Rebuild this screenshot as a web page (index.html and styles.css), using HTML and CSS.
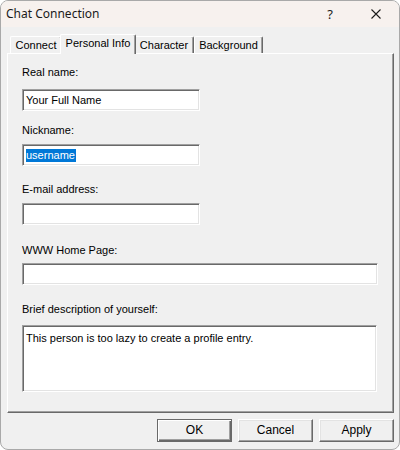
FILE: index.html
```html
<!DOCTYPE html>
<html>
<head>
<meta charset="utf-8">
<link rel="stylesheet" href="styles.css">
</head>
<body>
<div class="window">
  <div class="titlebar">
    <span class="title">Chat Connection</span>
    <span class="cap-btn help">?</span>
    <span class="cap-btn close">
      <svg width="10" height="10" viewBox="0 0 10 10"><path d="M0.5 0.5 L9.5 9.5 M9.5 0.5 L0.5 9.5" stroke="#1b1b1b" stroke-width="1.1" fill="none"/></svg>
    </span>
  </div>
  <div class="body">
    <div class="tabs">
      <div class="tab tab-connect">Connect</div>
      <div class="tab tab-personal active">Personal Info</div>
      <div class="tab tab-character">Character</div>
      <div class="tab tab-background">Background</div>
    </div>
    <div class="panel">
      <div class="field field-real">
        <div class="label">Real name:</div>
        <div class="input short">Your Full Name</div>
      </div>
      <div class="field field-nick">
        <div class="label">Nickname:</div>
        <div class="input short"><span class="sel">username</span></div>
      </div>
      <div class="field field-email">
        <div class="label">E-mail address:</div>
        <div class="input short"></div>
      </div>
      <div class="field field-www">
        <div class="label">WWW Home Page:</div>
        <div class="input long"></div>
      </div>
      <div class="field field-brief">
        <div class="label">Brief description of yourself:</div>
        <div class="input area">This person is too lazy to create a profile entry.</div>
      </div>
    </div>
    <div class="buttons">
      <div class="btn default">OK</div>
      <div class="btn">Cancel</div>
      <div class="btn">Apply</div>
    </div>
  </div>
</div>
</body>
</html>
```

FILE: styles.css
```css
* { box-sizing: border-box; }
html, body { margin: 0; padding: 0; background: #ffffff; }
body {
  width: 400px;
  height: 450px;
  font-family: "Liberation Sans", Arial, sans-serif;
  font-size: 11px;
  color: #000;
}
.window {
  width: 400px;
  height: 450px;
  border: 1px solid #a9a9a9;
  border-radius: 8px;
  background: #f0f0f0;
  overflow: hidden;
  display: flex;
  flex-direction: column;
}
.titlebar {
  height: 26px;
  background: #f7f1ee;
  display: flex;
  align-items: center;
  flex: none;
}
.title {
  flex: 1;
  padding-left: 5px;
  font-family: "Noto Sans", "Open Sans", sans-serif;
  font-size: 12px;
  color: #1a1a1a;
  line-height: 16px;
}
.cap-btn {
  width: 46px;
  height: 26px;
  display: flex;
  align-items: center;
  justify-content: center;
  font-family: "Noto Sans", sans-serif;
  font-size: 13px;
  color: #1a1a1a;
}
.close svg { display: block; }
.body {
  flex: 1;
  display: flex;
  flex-direction: column;
  padding: 7px 0 0 6px;
}
.tabs {
  height: 19px;
  display: flex;
  align-items: flex-end;
  padding-left: 3px;
  position: relative;
  z-index: 2;
}
.tab {
  height: 17px;
  line-height: 16px;
  text-align: center;
  white-space: nowrap;
  background: #f0f0f0;
  border-top: 1px solid #ffffff;
  border-left: 1px solid #ffffff;
  border-right: 1px solid #696969;
  box-shadow: inset -1px 0 #a0a0a0;
  border-radius: 2px 2px 0 0;
}
.tab-connect { width: 52px; }
.tab-personal { width: 76px; }
.tab-character { width: 60px; }
.tab-background { width: 69px; }
.tab.active {
  height: 20px;
  margin: 0 -2px -1px -2px;
  padding-bottom: 3px;
  line-height: 16px;
  position: relative;
  z-index: 3;
}
.panel {
  width: 387px;
  height: 360px;
  border: 1px solid;
  border-color: #ffffff #696969 #696969 #ffffff;
  box-shadow: inset -1px -1px #a0a0a0;
  padding: 12px 0 0 14px;
  display: flex;
  flex-direction: column;
  flex: none;
}
.field { display: flex; flex-direction: column; }
.label { height: 13px; line-height: 13px; white-space: nowrap; }
.input {
  height: 22px;
  background: #ffffff;
  border: 1px solid;
  border-color: #a0a0a0 #ffffff #ffffff #a0a0a0;
  box-shadow: inset 1px 1px #696969, inset -1px -1px #e3e3e3;
  padding: 2px 3px 0 3px;
  line-height: 16px;
  white-space: nowrap;
}
.input.short { width: 178px; }
.input.long { width: 356px; }
.input.area { width: 355px; height: 67px; padding-top: 4px; }
.sel { background: #0078d7; color: #ffffff; display: inline-block; line-height: 13px; height: 13px; padding-right: 1px; margin-top: 1px; }
.field-real .label { margin-bottom: 10px; }
.field-nick { margin-top: 13px; }
.field-nick .label { margin-bottom: 7px; }
.field-email { margin-top: 17px; }
.field-email .label { margin-bottom: 7px; }
.field-www { margin-top: 19px; }
.field-www .label { margin-bottom: 6px; }
.field-brief { margin-top: 18px; }
.field-brief .label { margin-bottom: 9px; }
.buttons {
  width: 387px;
  display: flex;
  justify-content: flex-end;
  gap: 6px;
  margin-top: 6px;
}
.btn {
  width: 75px;
  height: 23px;
  line-height: 20px;
  text-align: center;
  background: #f0f0f0;
  border: 1px solid;
  border-color: #ffffff #696969 #696969 #ffffff;
  box-shadow: inset -1px -1px #a0a0a0, inset 1px 1px #e3e3e3;
  font-size: 12px;
}
.btn.default {
  border-color: #696969;
  box-shadow: inset 1px 1px #ffffff, inset -1px -1px #696969, inset -2px -2px #a0a0a0;
}
```
